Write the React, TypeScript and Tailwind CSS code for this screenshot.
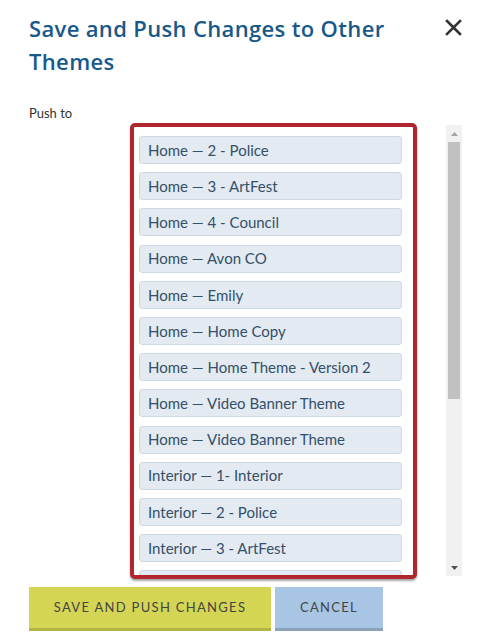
import React from 'react';

const themes = [
  'Home — 2 - Police',
  'Home — 3 - ArtFest',
  'Home — 4 - Council',
  'Home — Avon CO',
  'Home — Emily',
  'Home — Home Copy',
  'Home — Home Theme - Version 2',
  'Home — Video Banner Theme',
  'Home — Video Banner Theme',
  'Interior — 1- Interior',
  'Interior — 2 - Police',
  'Interior — 3 - ArtFest',
  'Interior — 4 - Council',
];

export default function App() {
  return (
    <div className="w-[489px] h-[636px] bg-white overflow-hidden font-['Lato',sans-serif] relative">
      {/* Header */}
      <div className="flex items-start justify-between pl-[29px] pr-[27px] pt-[12px]">
        <h2 className="font-['Open_Sans',sans-serif] text-[22px] leading-[33px] font-semibold tracking-[0.35px] text-[#17598a] w-[380px]">
          Save and Push Changes to Other Themes
        </h2>
        <button className="mt-[7px] text-[#333]" aria-label="Close">
          <svg width="17" height="17" viewBox="0 0 17 17">
            <path d="M2 2 L15 15 M15 2 L2 15" stroke="#333" strokeWidth="2.6" strokeLinecap="square" />
          </svg>
        </button>
      </div>

      <div className="pl-[29px] mt-[27px] text-[13px] leading-[16px] text-[#333]">Push to</div>

      {/* List + scrollbar */}
      <div className="flex items-start mt-[2px] pl-[130px]">
        <div className="w-[287px] h-[456px] border-[4px] border-[#b0262e] rounded-[5px] shadow-[0_2px_2px_rgba(0,0,0,0.35)] overflow-hidden bg-white">
          <div className="flex flex-col gap-[8.2px] pt-[9px] pl-[5px] pr-[11px]">
            {themes.map((t, i) => (
              <div
                key={i}
                className="h-[28px] shrink-0 flex items-center px-[8px] bg-[#e3eaf1] border border-[#cddae5] rounded-[3px] text-[15px] text-[#34506a]"
              >
                {t}
              </div>
            ))}
          </div>
        </div>
        <div className="ml-[29px] mt-[2px] w-[16px] h-[451px] bg-[#f1f1f1] flex flex-col items-center">
          <div className="h-[17px] flex items-center justify-center">
            <svg width="7" height="4" viewBox="0 0 7 4"><path d="M0 4 L3.5 0 L7 4 Z" fill="#a3a3a3" /></svg>
          </div>
          <div className="w-[12px] ml-[2px] self-start h-[257px] bg-[#c1c1c1]" />
          <div className="flex-1" />
          <div className="h-[17px] flex items-center justify-center">
            <svg width="7" height="4" viewBox="0 0 7 4"><path d="M0 0 L7 0 L3.5 4 Z" fill="#505050" /></svg>
          </div>
        </div>
      </div>

      {/* Buttons */}
      <div className="flex gap-[4px] pl-[29px] mt-[8px]">
        <button className="w-[242px] h-[44px] bg-[#d4d555] border-b-[3px] border-[#b5b543] text-[13px] tracking-[1.3px] text-[#444]">
          SAVE AND PUSH CHANGES
        </button>
        <button className="w-[108px] h-[44px] bg-[#a8c6e3] border-b-[3px] border-[#8aa3bb] text-[13px] tracking-[1.3px] text-[#444]">
          CANCEL
        </button>
      </div>
    </div>
  );
}
